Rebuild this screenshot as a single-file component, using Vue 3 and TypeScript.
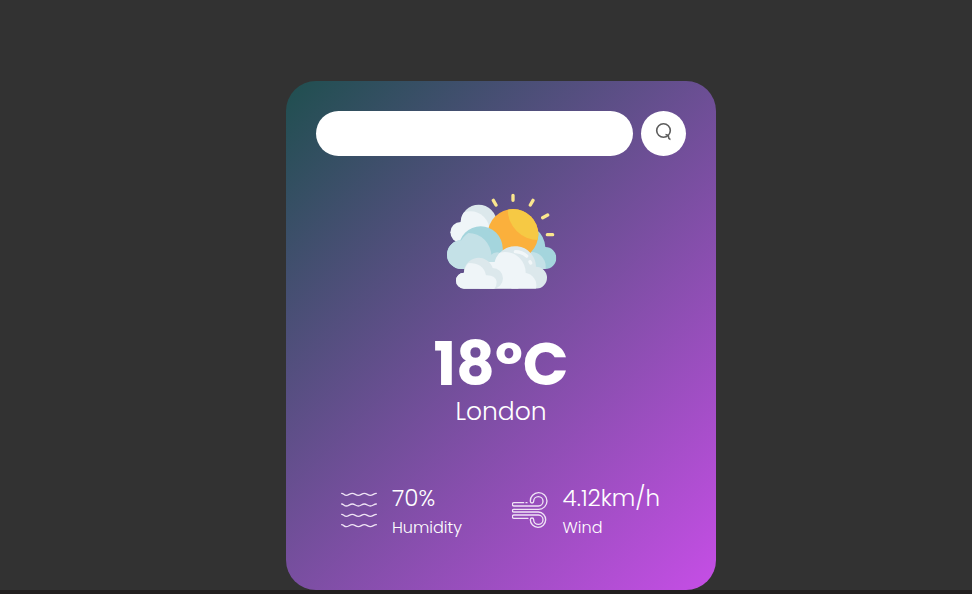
<script setup lang="ts">
import { ref } from 'vue'

interface Weather {
  temperature: number
  city: string
  humidity: number
  wind: number
}

const query = ref('')
const weather = ref<Weather>({ temperature: 18, city: 'London', humidity: 70, wind: 4.12 })

const waves = [40, 72, 103, 134]

function search(): void {
  const city = query.value.trim()
  if (city) weather.value = { ...weather.value, city }
}
</script>

<template>
  <div class="page">
    <main class="content">
      <div class="card">
        <form class="search" @submit.prevent="search">
          <input v-model="query" class="search-input" type="text" aria-label="City" spellcheck="false" />
          <button class="search-button" type="submit" aria-label="Search">
            <svg class="search-icon" viewBox="0 0 18 20" aria-hidden="true">
              <circle cx="8.5" cy="8.5" r="6.8" />
              <path d="M10.500 12.500Q14 13 13.500 15Q13.500 17 15.500 17.500" />
            </svg>
          </button>
        </form>

        <section class="weather">
          <svg class="weather-icon" viewBox="0 0 390 330" aria-hidden="true">
            <defs>
              <clipPath id="sun"><circle cx="231" cy="145" r="76" /></clipPath>
              <clipPath id="back-cloud"><circle cx="128" cy="110" r="54" /></clipPath>
              <clipPath id="right-cloud">
                <path d="M245 185V130H300q25 19 28 53a33 33 0 0 1 0 66H245z" />
              </clipPath>
              <clipPath id="teal-cloud">
                <path d="M76 249a43 43 0 0 1 0-86a66 66 0 0 1 122 20l12 66z" />
              </clipPath>
              <clipPath id="front-cloud">
                <path d="M130 308V228h46a63 63 0 0 1 124 14a33 33 0 0 1 0 66z" />
              </clipPath>
            </defs>
            <path class="rays" d="M231 28v15M172 43l8 14M291 43l-8 14M320 95l15-8M334 146h16" />
            <circle class="mist" cx="128" cy="110" r="54" />
            <circle class="snow" cx="103" cy="134" r="58" clip-path="url(#back-cloud)" />
            <circle class="snow" cx="74" cy="139" r="31" />
            <g clip-path="url(#right-cloud)">
              <rect class="teal" x="220" y="100" width="160" height="160" />
              <circle class="ice" cx="286" cy="241" r="43" />
            </g>
            <circle class="orange" cx="231" cy="145" r="76" />
            <circle class="yellow" cx="307" cy="70" r="92" clip-path="url(#sun)" />
            <circle class="teal" cx="134" cy="187" r="66" />
            <g clip-path="url(#teal-cloud)">
              <rect class="teal" x="20" y="110" width="220" height="145" />
              <circle class="ice" cx="97" cy="210" r="69" />
              <circle class="ice" cx="184" cy="227" r="28" />
            </g>
            <g clip-path="url(#front-cloud)">
              <rect class="mist" x="120" y="175" width="220" height="140" />
              <circle class="snow" cx="207" cy="260" r="62" />
              <circle class="snow" cx="263" cy="298" r="38" />
            </g>
            <path class="mist" d="M84 308a24 24 0 0 1 0-48a44 44 0 0 1 86-14a31 31 0 0 1 0 62z" />
            <path class="snow" d="M84 308a24 24 0 0 1 0-48q2-19 14-29q45 0 52 37q30-1 32 20q0 12-7 20z" />
            <path class="shine" d="M238 197q20 0 34 13M282 227l2 4" />
          </svg>
          <h1 class="temperature">{{ weather.temperature }}°C</h1>
          <h2 class="city">{{ weather.city }}</h2>
        </section>

        <section class="details">
          <div class="detail">
            <svg class="detail-icon" viewBox="18 36 108 108" aria-hidden="true">
              <path
                v-for="y in waves"
                :key="y"
                :d="`M20 ${y}c6 0 7 6 14 6s10-6 18-6s10 6 18 6s10-6 18-6s10 6 18 6s10-6 18-6`"
              />
            </svg>
            <div>
              <p class="value">{{ weather.humidity }}%</p>
              <p class="label">Humidity</p>
            </div>
          </div>
          <div class="detail">
            <svg class="detail-icon" viewBox="22 36 108 108" aria-hidden="true">
              <path d="M57 68H28q-5 0-5 5t5 5H101a14 14 0 1 0-14-14q0 5-5 5t-5-5a25 25 0 1 1 25 24H28" />
              <path d="M64 68h3M28 88q-5 0-5 4t5 4H101a23 23 0 1 1-24 23q0-5 5-5t5 5a14 14 0 1 0 14-14H28q-5 0-5 5t5 5H70" />
            </svg>
            <div>
              <p class="value">{{ weather.wind }}km/h</p>
              <p class="label">Wind</p>
            </div>
          </div>
        </section>
      </div>
    </main>
    <footer class="strip"></footer>
  </div>
</template>

<style>
body {
  margin: 0;
  background: #323232;
}
</style>

<style scoped>
* {
  box-sizing: border-box;
}

.page {
  min-height: 100vh;
  display: flex;
  flex-direction: column;
  font-family: Poppins, Inter, sans-serif;
  color: #fff;
}

.content {
  padding: 81px 0 0 30px;
}

.card {
  width: 90%;
  max-width: 430px;
  margin: 0 auto;
  padding: 30px 30px 47px;
  border-radius: 30px;
  background: linear-gradient(135deg, #1f4f4f, #c64ee6);
}

.search {
  display: flex;
  gap: 8px;
}

.search-input {
  flex: 1;
  min-width: 0;
  height: 45px;
  padding: 0 24px;
  border: 0;
  border-radius: 30px;
  outline: 0;
  background: #fff;
  color: #555;
  font: inherit;
  font-size: 16px;
}

.search-button {
  display: grid;
  place-items: center;
  width: 45px;
  height: 45px;
  padding: 0 0 4px;
  border: 0;
  border-radius: 50%;
  background: #fff;
  cursor: pointer;
}

.search-icon {
  width: 18px;
  height: 20px;
  fill: none;
  stroke: #5c5c5c;
  stroke-width: 1.6;
}

.weather {
  padding-top: 30px;
  text-align: center;
}

.weather-icon {
  display: block;
  width: 130px;
  height: 110px;
  margin: 0 auto;
}

.snow {
  fill: #eff5f8;
}

.mist {
  fill: #dce8ec;
}

.teal {
  fill: #a4d5dd;
}

.ice {
  fill: #c4e1e7;
}

.orange {
  fill: #fbb03c;
}

.yellow {
  fill: #f6c944;
}

.rays,
.shine {
  fill: none;
  stroke: #fbe68e;
  stroke-width: 10;
  stroke-linecap: round;
}

.shine {
  stroke: #f2f7f9;
}

.temperature {
  margin: 33px 0 0;
  font-size: 60px;
  font-weight: 700;
  line-height: 70px;
}

.city {
  margin: 0;
  font-size: 25px;
  font-weight: 300;
  line-height: 26px;
}

.details {
  display: flex;
  justify-content: space-between;
  margin-top: 58px;
  padding: 0 26px 0 25px;
}

.detail {
  display: flex;
  gap: 15px;
}

.detail-icon {
  width: 36px;
  height: 36px;
  margin-top: 9px;
  fill: none;
  stroke: #f0e4f6;
  stroke-width: 4;
  stroke-linecap: round;
}

.value,
.label {
  margin: 0;
  font-weight: 300;
}

.value {
  font-size: 23px;
  line-height: 30px;
}

.label {
  font-size: 16px;
  line-height: 30px;
}

.strip {
  flex: 1;
  min-height: 4px;
  background: #221f20;
}
</style>
